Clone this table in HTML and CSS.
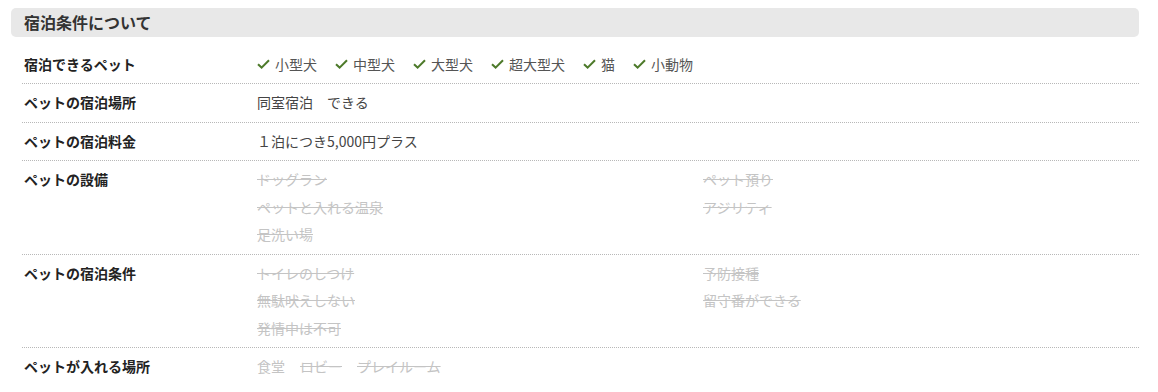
FILE: index.html
```html
<!DOCTYPE html>
<html lang="ja">
<head>
<meta charset="utf-8">
<link rel="stylesheet" href="styles.css">
</head>
<body>
<section class="panel">
  <h2 class="panel-title">宿泊条件について</h2>
  <div class="rows">
    <div class="row">
      <div class="label">宿泊できるペット</div>
      <div class="value checks">
        <span class="ok"><svg class="tick" viewBox="0 0 13 10"><path d="M1 5.2 L4.6 8.6 L12 1.2"/></svg>小型犬</span>
        <span class="ok"><svg class="tick" viewBox="0 0 13 10"><path d="M1 5.2 L4.6 8.6 L12 1.2"/></svg>中型犬</span>
        <span class="ok"><svg class="tick" viewBox="0 0 13 10"><path d="M1 5.2 L4.6 8.6 L12 1.2"/></svg>大型犬</span>
        <span class="ok"><svg class="tick" viewBox="0 0 13 10"><path d="M1 5.2 L4.6 8.6 L12 1.2"/></svg>超大型犬</span>
        <span class="ok"><svg class="tick" viewBox="0 0 13 10"><path d="M1 5.2 L4.6 8.6 L12 1.2"/></svg>猫</span>
        <span class="ok"><svg class="tick" viewBox="0 0 13 10"><path d="M1 5.2 L4.6 8.6 L12 1.2"/></svg>小動物</span>
      </div>
    </div>
    <div class="row">
      <div class="label">ペットの宿泊場所</div>
      <div class="value">同室宿泊　できる</div>
    </div>
    <div class="row">
      <div class="label">ペットの宿泊料金</div>
      <div class="value">１泊につき5,000円プラス</div>
    </div>
    <div class="row">
      <div class="label">ペットの設備</div>
      <div class="value grid2">
        <span class="off">ドッグラン</span>
        <span class="off">ペット預り</span>
        <span class="off">ペットと入れる温泉</span>
        <span class="off">アジリティ</span>
        <span class="off">足洗い場</span>
      </div>
    </div>
    <div class="row">
      <div class="label">ペットの宿泊条件</div>
      <div class="value grid2">
        <span class="off">トイレのしつけ</span>
        <span class="off">予防接種</span>
        <span class="off">無駄吠えしない</span>
        <span class="off">留守番ができる</span>
        <span class="off">発情中は不可</span>
      </div>
    </div>
    <div class="row last">
      <div class="label">ペットが入れる場所</div>
      <div class="value inline">
        <span class="muted">食堂</span>
        <span class="off">ロビー</span>
        <span class="off">プレイルーム</span>
      </div>
    </div>
  </div>
</section>
</body>
</html>
```
FILE: styles.css
```css
* { box-sizing: border-box; }
html, body { margin: 0; background: #fff; }
body {
  font-family: "Noto Sans CJK JP", "Noto Sans", sans-serif;
  font-size: 14px;
  color: #333;
}
.panel {
  padding: 8px 19px 0 11px;
}
.panel-title {
  margin: 0;
  height: 29px;
  line-height: 29px;
  padding-left: 13px;
  background: #e8e8e8;
  border-radius: 5px;
  font-size: 16px;
  font-weight: bold;
  color: #333;
}
.rows {
  margin: 8.5px 0 0 11px;
}
.row {
  display: flex;
  padding: 5px 0;
  line-height: 27.5px;
  border-bottom: 1px dotted #b8b8b8;
}
.row.last { border-bottom: none; }
.label {
  width: 235px;
  flex: none;
  padding-left: 2px;
  font-weight: bold;
  color: #222;
}
.value { flex: 1; color: #444; }
.checks { display: flex; gap: 18px; }
.ok { display: inline-flex; align-items: center; color: #555; }
.tick {
  width: 13px;
  height: 10px;
  margin-right: 5px;
  fill: none;
  stroke: #4d7a2a;
  stroke-width: 2;
}
.grid2 {
  display: grid;
  grid-template-columns: 446px 1fr;
}
.off {
  color: #c4c4c4;
  text-decoration: line-through;
}
.muted { color: #c4c4c4; }
.inline { display: flex; gap: 15px; }
```
